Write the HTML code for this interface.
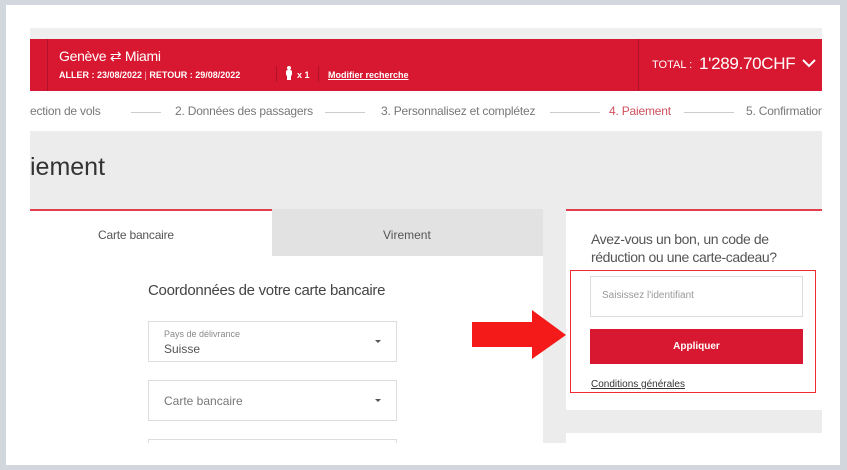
<!DOCTYPE html>
<html><head><meta charset="utf-8"><style>
*{margin:0;padding:0;box-sizing:border-box}
body{width:847px;height:470px;background:#d2d6dd;position:relative;overflow:hidden;font-family:"Liberation Sans",sans-serif}
.a{position:absolute}
</style></head><body>
<div class="a" style="left:6px;top:5px;width:834px;height:460px;background:#fff"></div>
<div class="a" style="left:30px;top:28px;width:792px;height:11px;background:#efefef"></div>
<div class="a" style="left:30px;top:39px;width:792px;height:52px;background:#d71830"></div>
<div class="a" style="left:47px;top:39px;width:1px;height:52px;background:#b01227"></div>
<div class="a" style="left:638px;top:39px;width:1px;height:52px;background:#b01227"></div>
<div class="a" style="left:59px;top:48px;color:#fff;font-size:14px;letter-spacing:-0.3px">Genève ⇄ Miami</div>
<div class="a" style="left:59px;top:70px;color:#fff;font-size:9px;font-weight:bold;white-space:nowrap">ALLER : 23/08/2022 <span style="font-weight:normal;opacity:.7">|</span> RETOUR : 29/08/2022</div>
<div class="a" style="left:276px;top:66px;width:1px;height:16px;background:#b01227"></div>
<div class="a" style="left:287px;top:66px;width:4px;height:4px;background:#fff;border-radius:50%"></div>
<div class="a" style="left:286px;top:70px;width:6px;height:6px;background:#fff;border-radius:2px"></div>
<div class="a" style="left:287px;top:75px;width:4px;height:5px;background:#fff"></div>
<div class="a" style="left:297px;top:70px;color:#fff;font-size:9px;font-weight:bold">x 1</div>
<div class="a" style="left:318px;top:66px;width:1px;height:16px;background:#b01227"></div>
<div class="a" style="left:328px;top:70px;color:#fff;font-size:9px;font-weight:bold;text-decoration:underline">Modifier recherche</div>
<div class="a" style="left:652px;top:59px;color:#fff;font-size:11px">TOTAL :</div>
<div class="a" style="left:699px;top:54px;color:#fff;font-size:17px;letter-spacing:-0.3px">1'289.70CHF</div>
<svg class="a" style="left:802px;top:58px" width="14" height="10"><path d="M1 2 L7 8 L13 2" stroke="#fff" stroke-width="2" fill="none"/></svg>
<div class="a" style="left:30px;top:104px;width:792px;font-size:12px;color:#777;white-space:nowrap;overflow:hidden;height:18px;letter-spacing:-0.2px">
<span class="a" style="left:0;top:0">ection de vols</span>
<span class="a" style="left:101px;top:8px;width:30px;height:1px;background:#ccc"></span>
<span class="a" style="left:145px;top:0">2. Données des passagers</span>
<span class="a" style="left:295px;top:8px;width:40px;height:1px;background:#ccc"></span>
<span class="a" style="left:351px;top:0">3. Personnalisez et complétez</span>
<span class="a" style="left:520px;top:8px;width:50px;height:1px;background:#ccc"></span>
<span class="a" style="left:579px;top:0;color:#d0505e">4. Paiement</span>
<span class="a" style="left:654px;top:8px;width:50px;height:1px;background:#ccc"></span>
<span class="a" style="left:716px;top:0">5. Confirmation</span>
</div>
<div class="a" style="left:30px;top:131px;width:792px;height:312px;background:#ececec"></div>
<div class="a" style="left:30px;top:153px;font-size:25px;color:#333">iement</div>
<div class="a" style="left:30px;top:209px;width:513px;height:234px;background:#fff"></div>
<div class="a" style="left:30px;top:209px;width:242px;height:2px;background:#e0404e"></div>
<div class="a" style="left:272px;top:209px;width:271px;height:47px;background:#e2e2e2"></div>
<div class="a" style="left:98px;top:228px;font-size:12px;color:#555;letter-spacing:-0.2px">Carte bancaire</div>
<div class="a" style="left:383px;top:228px;font-size:12px;color:#555">Virement</div>
<div class="a" style="left:148px;top:282px;font-size:15px;color:#444;letter-spacing:-0.3px">Coordonnées de votre carte bancaire</div>
<div class="a" style="left:148px;top:321px;width:249px;height:41px;border:1px solid #ddd"></div>
<div class="a" style="left:164px;top:329px;font-size:9px;color:#888">Pays de délivrance</div>
<div class="a" style="left:164px;top:342px;font-size:12px;color:#555">Suisse</div>
<div class="a" style="left:375px;top:340px;width:0;height:0;border-left:3px solid transparent;border-right:3px solid transparent;border-top:3px solid #555"></div>
<div class="a" style="left:148px;top:380px;width:249px;height:41px;border:1px solid #ddd"></div>
<div class="a" style="left:164px;top:394px;font-size:12px;color:#777">Carte bancaire</div>
<div class="a" style="left:375px;top:399px;width:0;height:0;border-left:3px solid transparent;border-right:3px solid transparent;border-top:3px solid #555"></div>
<div class="a" style="left:148px;top:439px;width:249px;height:4px;border:1px solid #ddd;border-bottom:none"></div>
<div class="a" style="left:566px;top:209px;width:256px;height:201px;background:#fff;border-top:2px solid #e0404e"></div>
<div class="a" style="left:566px;top:433px;width:256px;height:10px;background:#fff"></div>
<div class="a" style="left:591px;top:230px;font-size:14px;color:#555;line-height:18px;letter-spacing:-0.4px">Avez-vous un bon, un code de<br>réduction ou une carte-cadeau?</div>
<div class="a" style="left:570px;top:270px;width:246px;height:123px;border:1.5px solid #f02a30"></div>
<div class="a" style="left:590px;top:276px;width:213px;height:41px;border:1px solid #ddd"></div>
<div class="a" style="left:602px;top:290px;font-size:10px;color:#999">Saisissez l'identifiant</div>
<div class="a" style="left:590px;top:329px;width:213px;height:35px;background:#d71830;color:#fff;font-size:10px;font-weight:bold;text-align:center;line-height:35px">Appliquer</div>
<div class="a" style="left:591px;top:379px;font-size:10px;color:#333;text-decoration:underline">Conditions générales</div>
<svg class="a" style="left:472px;top:310px" width="96" height="50"><polygon points="0,12 60,12 60,0 94,25 60,49 60,37 0,37" fill="#f51a1a"/></svg>
</body></html>
